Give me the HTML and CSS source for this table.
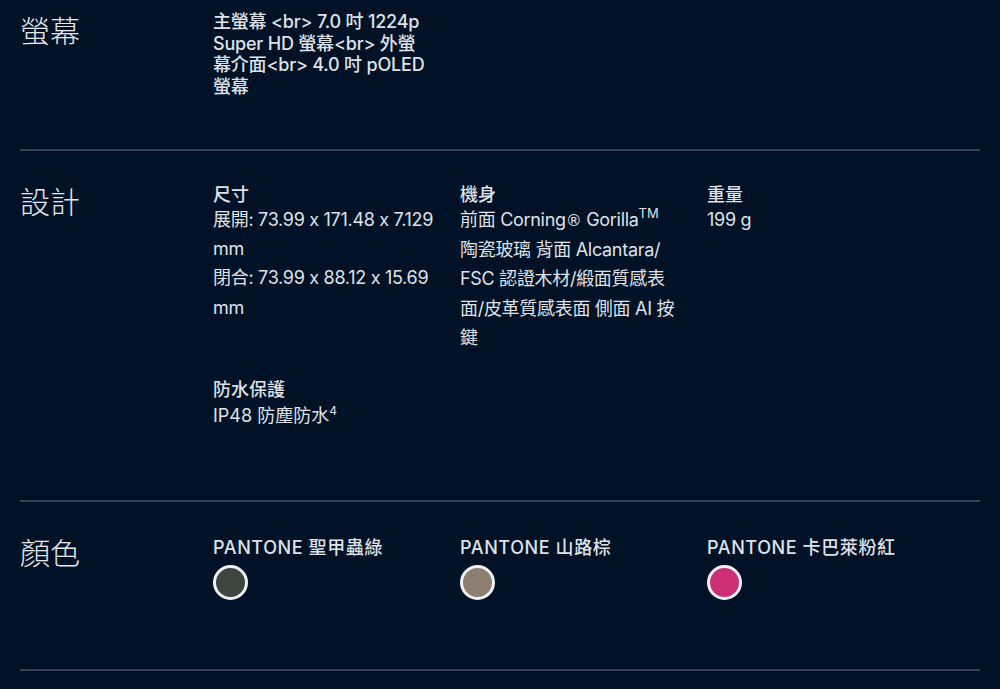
FILE: index.html
```html
<!DOCTYPE html>
<html lang="zh-Hant">
<head>
<meta charset="utf-8">
<title>規格</title>
<link rel="stylesheet" href="styles.css">
</head>
<body>
<main class="specs">
  <section class="spec-row spec-row--first">
    <h3 class="spec-label">螢幕</h3>
    <div class="spec-body">
      <p class="spec-text-tight">主螢幕 &lt;br&gt; 7.0 吋 1224p<br>Super HD 螢幕&lt;br&gt; 外螢<br>幕介面&lt;br&gt; 4.0 吋 pOLED<br>螢幕</p>
    </div>
  </section>

  <section class="spec-row spec-row--design">
    <h3 class="spec-label">設計</h3>
    <div class="spec-body spec-grid">
      <div class="spec-item">
        <h4 class="item-title">尺寸</h4>
        <p class="item-value">展開: 73.99 x 171.48 x 7.129<br>mm<br>閉合: 73.99 x 88.12 x 15.69<br>mm</p>
      </div>
      <div class="spec-item">
        <h4 class="item-title">機身</h4>
        <p class="item-value">前面 Corning<span class="reg">®</span> Gorilla<sup class="tm">TM</sup><br>陶瓷玻璃 背面 Alcantara/<br>FSC 認證木材/緞面質感表<br>面/皮革質感表面 側面 AI 按<br>鍵</p>
      </div>
      <div class="spec-item">
        <h4 class="item-title">重量</h4>
        <p class="item-value">199 g</p>
      </div>
      <div class="spec-item">
        <h4 class="item-title">防水保護</h4>
        <p class="item-value-tight">IP48 防塵防水<sup>4</sup></p>
      </div>
    </div>
  </section>

  <section class="spec-row spec-row--colors">
    <h3 class="spec-label">顏色</h3>
    <div class="spec-body spec-grid color-grid">
      <div class="color-item">
        <h4 class="item-title color-name">PANTONE 聖甲蟲綠</h4>
        <span class="swatch swatch--green"></span>
      </div>
      <div class="color-item">
        <h4 class="item-title color-name">PANTONE 山路棕</h4>
        <span class="swatch swatch--brown"></span>
      </div>
      <div class="color-item">
        <h4 class="item-title color-name">PANTONE 卡巴萊粉紅</h4>
        <span class="swatch swatch--pink"></span>
      </div>
    </div>
  </section>
</main>
</body>
</html>
```

FILE: styles.css
```css
html, body {
  margin: 0;
  padding: 0;
  background: #011227;
}

body {
  font-family: "Inter", "Noto Sans CJK TC", sans-serif;
  color: #dfe2e6;
  height: 689px;
  overflow: hidden;
}

.specs {
  padding: 0 20px;
}

.spec-row {
  display: grid;
  grid-template-columns: 193px 1fr;
  padding: 34px 0 67px;
  border-bottom: 2px solid #3a4355;
}

.spec-row--first {
  padding: 14px 0 51px;
}

.spec-row--design {
  padding: 34px 0 72px;
}

.spec-row--colors {
  padding: 34px 0 69px;
}

.spec-label {
  margin: -3px 0 0;
  font-family: "Noto Sans CJK TC", sans-serif;
  font-weight: 300;
  font-size: 30px;
  line-height: 36px;
  color: #e6e8ea;
}

.spec-body {
  min-width: 0;
}

.spec-text-tight {
  margin: -3px 0 0;
  white-space: nowrap;
  font-size: 18px;
  line-height: 21.7px;
  font-weight: 500;
  letter-spacing: -0.2px;
}

.spec-grid {
  display: grid;
  grid-template-columns: repeat(3, 247px);
  row-gap: 28px;
}

.color-grid {
  margin-top: 2px;
}

.spec-item {
  padding-right: 6px;
  white-space: nowrap;
}

.item-title {
  margin: 0;
  font-size: 18px;
  line-height: 20px;
  font-weight: 500;
}

.item-value {
  margin: 0;
  font-size: 18px;
  line-height: 29.3px;
  font-weight: 400;
  letter-spacing: -0.3px;
}

.item-value-tight {
  margin: 4px 0 0;
  font-size: 18px;
  line-height: 24px;
  font-weight: 400;
}

.reg {
  font-family: "DejaVu Sans", sans-serif;
  font-size: 16px;
}

sup {
  font-size: 12px;
  line-height: 0;
  vertical-align: 7px;
}

sup.tm {
  font-size: 13px;
  vertical-align: 8px;
  letter-spacing: 0;
}

.color-item {
  display: flex;
  flex-direction: column;
  align-items: flex-start;
  gap: 7px;
}

.color-name {
  font-weight: 500;
  letter-spacing: 0.6px;
}

.swatch {
  display: block;
  width: 29px;
  height: 29px;
  border-radius: 50%;
  border: 3px solid #f2f2f2;
}

.swatch--green { background: #3f4642; }
.swatch--brown { background: #8e7e71; }
.swatch--pink { background: #cc2f73; }
```
